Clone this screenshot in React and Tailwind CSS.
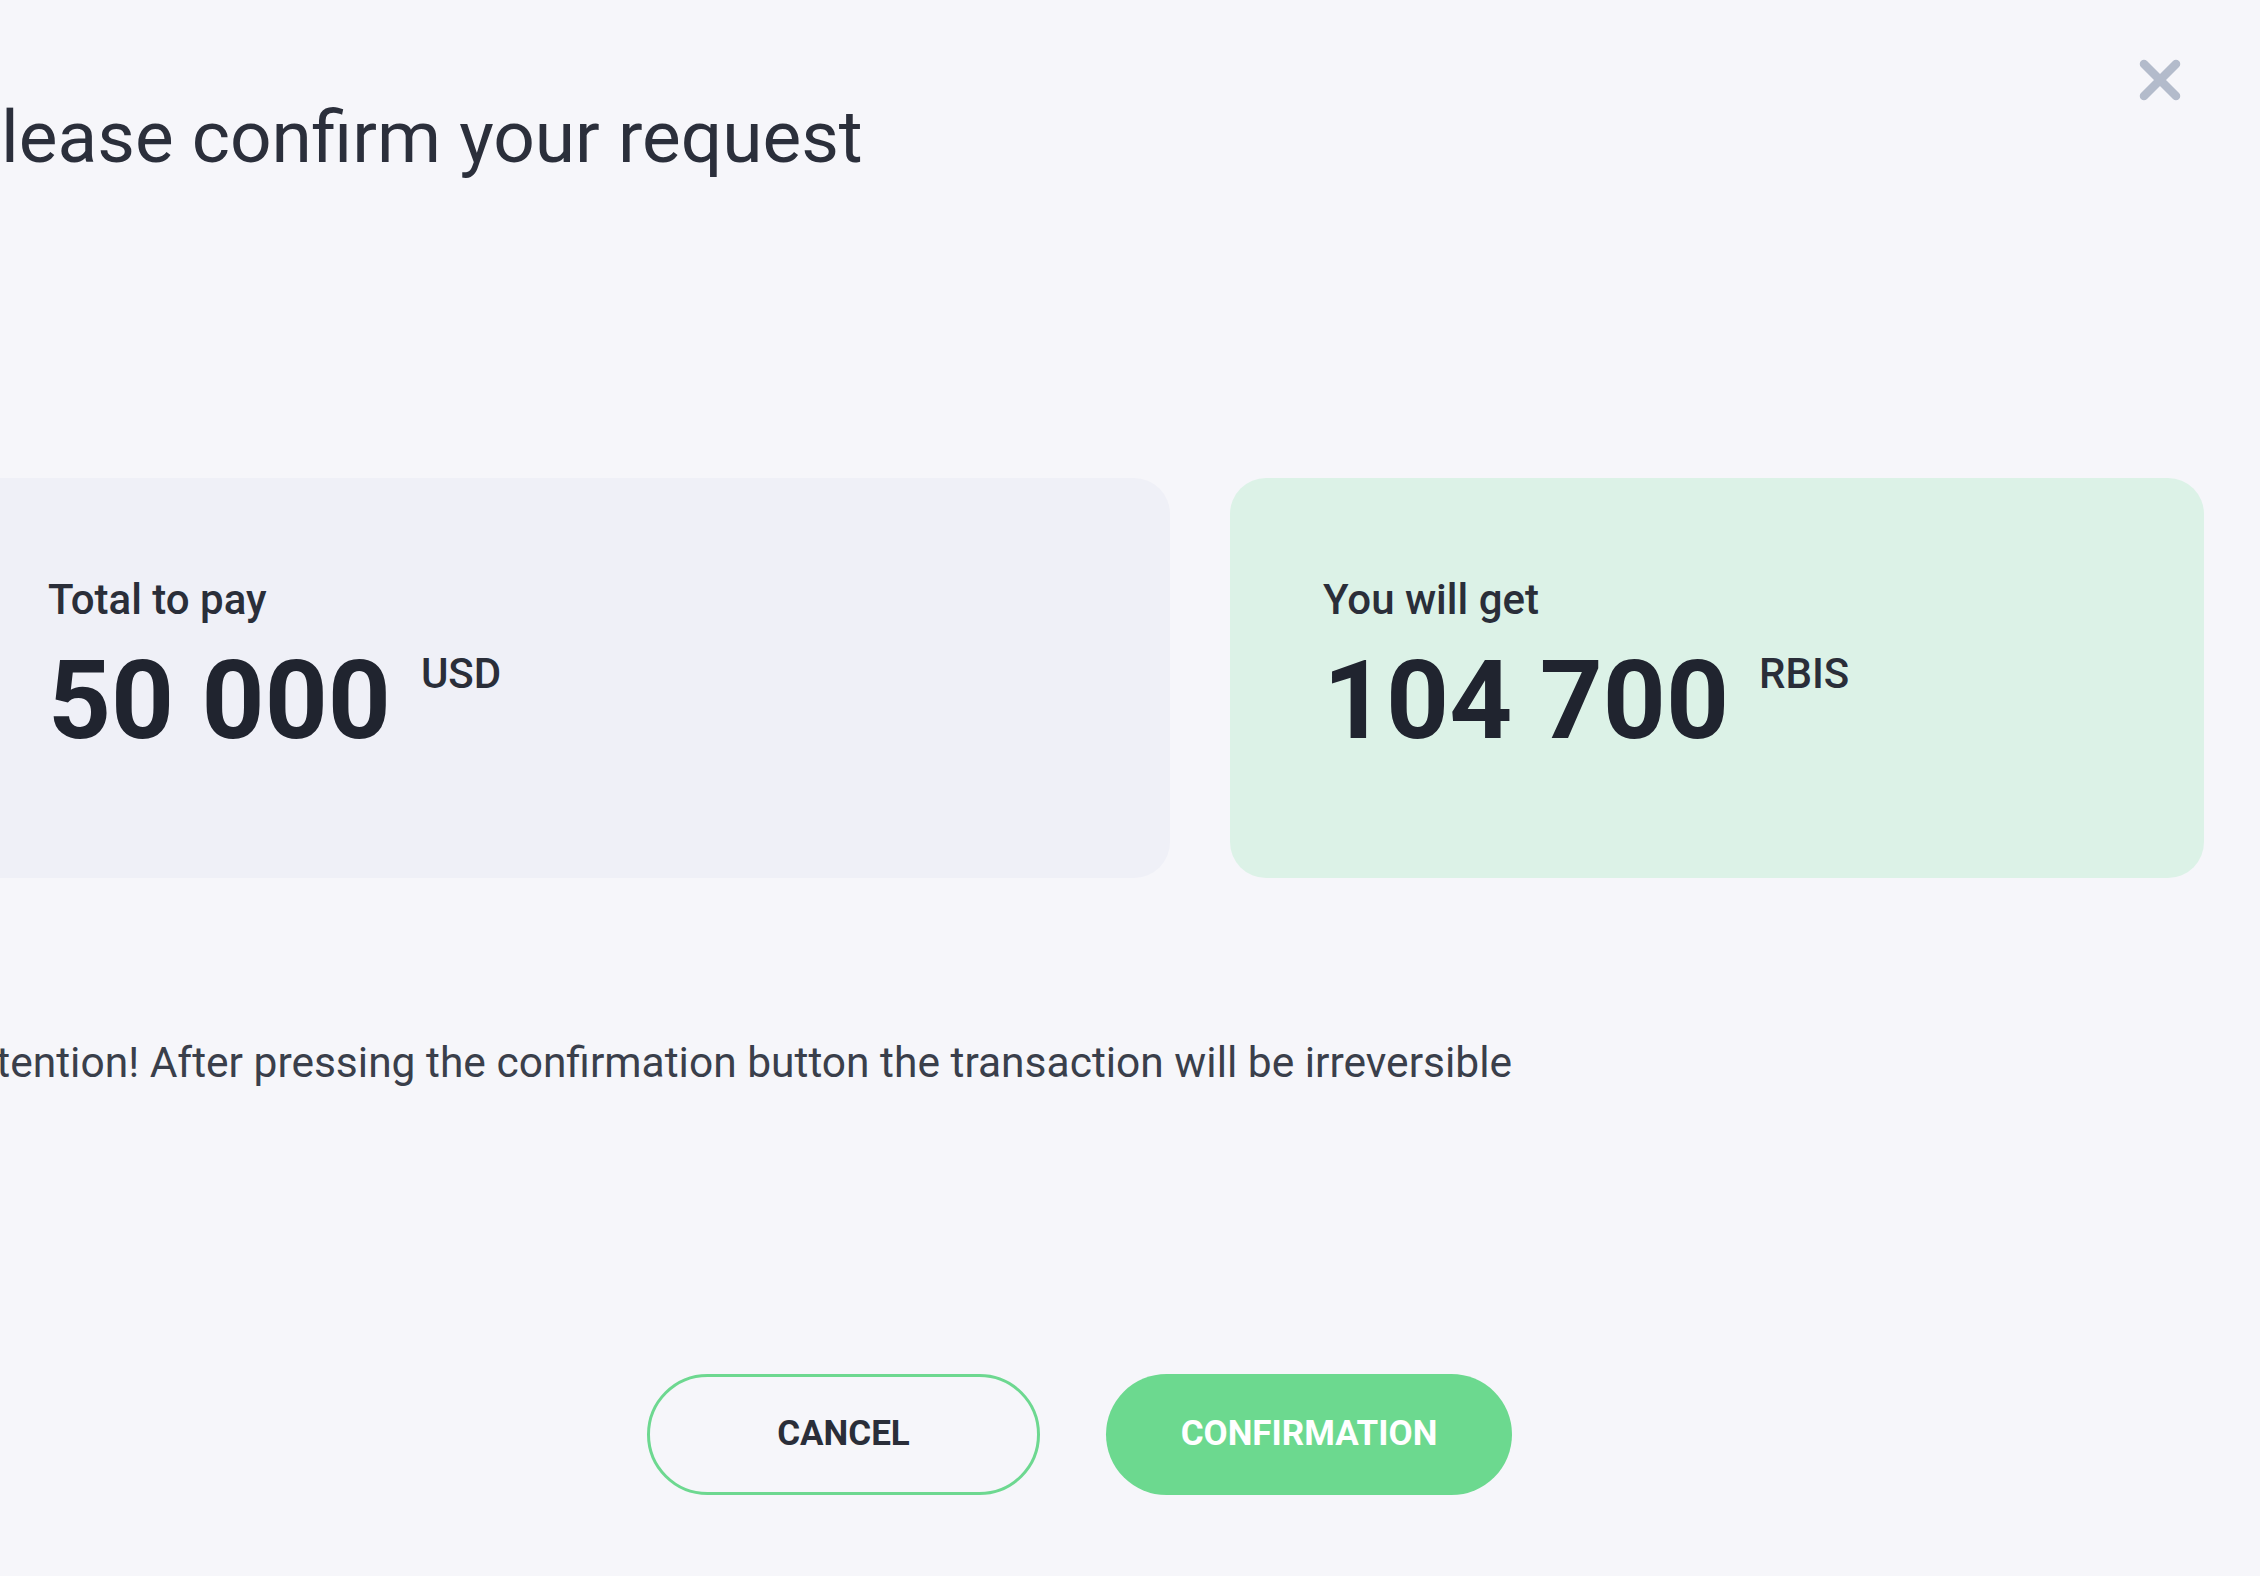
import React from "react";

const CloseIcon = () => (
  <svg width="44" height="44" viewBox="0 0 44 44" fill="none">
    <path d="M6 6L38 38M38 6L6 38" stroke="#b3bbcb" strokeWidth="8.5" strokeLinecap="round" />
  </svg>
);

const AmountCard = ({ label, amount, currency, className }) => (
  <div className={`h-[400px] rounded-[36px] pl-[93px] pt-[101px] ${className}`}>
    <div className="text-[42px] leading-[42px] font-medium text-[#2a2e39]">{label}</div>
    <div className="mt-[25px] flex items-start">
      <span className="text-[110px] leading-[110px] font-bold text-[#20242f]">{amount}</span>
      <span className="ml-[30px] mt-[7px] text-[42px] leading-[42px] font-medium text-[#2a2e39]">{currency}</span>
    </div>
  </div>
);

export default function App() {
  return (
    <div className="relative h-[1576px] w-full overflow-hidden bg-[#f6f6fa] font-['Roboto',sans-serif]">
      {/* Close */}
      <button className="absolute right-[78px] top-[58px]">
        <CloseIcon />
      </button>

      <div className="ml-[-45px] w-[2249px] pt-[101px]">
        {/* Title */}
        <h1 className="text-[73px] leading-[72px] font-normal text-[#2b2f3b]">Please confirm your request</h1>

        {/* Cards */}
        <div className="mt-[305px] flex gap-[60px]">
          <AmountCard label="Total to pay" amount="50 000" currency="USD" className="w-[1215px] bg-[#eff0f7]" />
          <AmountCard label="You will get" amount="104 700" currency="RBIS" className="w-[974px] bg-[#dcf2e7]" />
        </div>

        {/* Warning */}
        <p className="mt-[165px] text-[42.5px] leading-[40px] text-[#3a3f4b]">
          Attention! After pressing the confirmation button the transaction will be irreversible
        </p>

        {/* Buttons */}
        <div className="mt-[291px] flex justify-center gap-[66px]">
          <button className="h-[121px] w-[393px] rounded-full border-[3px] border-[#6dd890] text-[35px] font-bold text-[#2a2e39]">
            CANCEL
          </button>
          <button className="h-[121px] w-[406px] rounded-full bg-[#6cd98f] text-[35px] font-bold text-white">
            CONFIRMATION
          </button>
        </div>
      </div>
    </div>
  );
}
